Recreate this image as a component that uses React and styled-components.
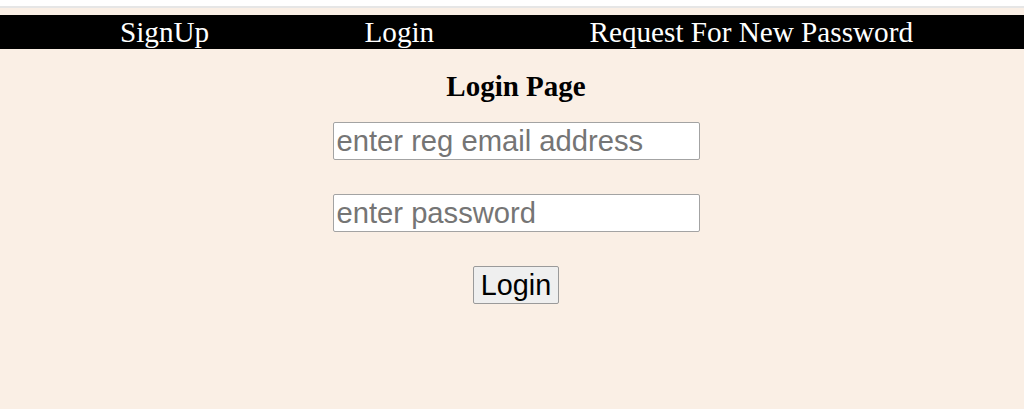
import React, { useState } from 'react';
import styled, { createGlobalStyle } from 'styled-components';

const GlobalStyle = createGlobalStyle`
  html, body {
    margin: 0;
    padding: 0;
    background: #ffffff;
  }
  body {
    font-family: "Liberation Serif", "Times New Roman", serif;
  }
`;

const TopStrip = styled.div`
  height: 6px;
  background: #ffffff;
  border-bottom: 2px solid #e6e6e6;
`;

const Page = styled.div`
  background: #faefe5;
  min-height: 401px;
  padding-top: 7px;
  box-sizing: border-box;
`;

const NavBar = styled.nav`
  display: flex;
  justify-content: space-between;
  align-items: center;
  height: 34px;
  padding: 0 111px 0 120px;
  background: #000000;
`;

const NavLink = styled.a`
  color: #ffffff;
  font-family: "Liberation Serif", "Times New Roman", serif;
  font-size: 29.2px;
  line-height: 34px;
  text-decoration: none;
  cursor: pointer;
`;

const Main = styled.main`
  display: flex;
  flex-direction: column;
  align-items: center;
  padding-left: 8px;
`;

const Title = styled.h2`
  margin: 21px 0 20px;
  font-family: "Liberation Serif", "Times New Roman", serif;
  font-size: 29px;
  font-weight: bold;
  line-height: 32px;
  color: #000000;
`;

const Field = styled.input`
  width: 367px;
  height: 38px;
  margin-bottom: ${(p) => p.$gap}px;
  padding: 1px 3px 0 3px;
  box-sizing: border-box;
  border: 1px solid #a3a3a3;
  border-radius: 2px;
  background: #ffffff;
  font-family: "Liberation Sans", Arial, sans-serif;
  font-size: 29.2px;
  color: #000000;
  outline: none;

  &::placeholder {
    color: #757575;
  }
`;

const SubmitButton = styled.button`
  height: 38px;
  padding: 0 7px;
  border: 1px solid #9a9a9a;
  border-radius: 2px;
  background: #efefef;
  font-family: "Liberation Sans", Arial, sans-serif;
  font-size: 28.8px;
  color: #000000;
  cursor: pointer;
`;

const App = () => {
  const [email, setEmail] = useState('');
  const [password, setPassword] = useState('');

  return (
    <>
      <GlobalStyle />
      <TopStrip />
      <Page>
        <NavBar>
          <NavLink>SignUp</NavLink>
          <NavLink>Login</NavLink>
          <NavLink>Request For New Password</NavLink>
        </NavBar>
        <Main>
          <Title>Login Page</Title>
          <Field
            type="email"
            placeholder="enter reg email address"
            value={email}
            $gap={34}
            onChange={(e) => setEmail(e.target.value)}
          />
          <Field
            type="password"
            placeholder="enter password"
            value={password}
            $gap={34}
            onChange={(e) => setPassword(e.target.value)}
          />
          <SubmitButton>Login</SubmitButton>
        </Main>
      </Page>
    </>
  );
};

export default App;
